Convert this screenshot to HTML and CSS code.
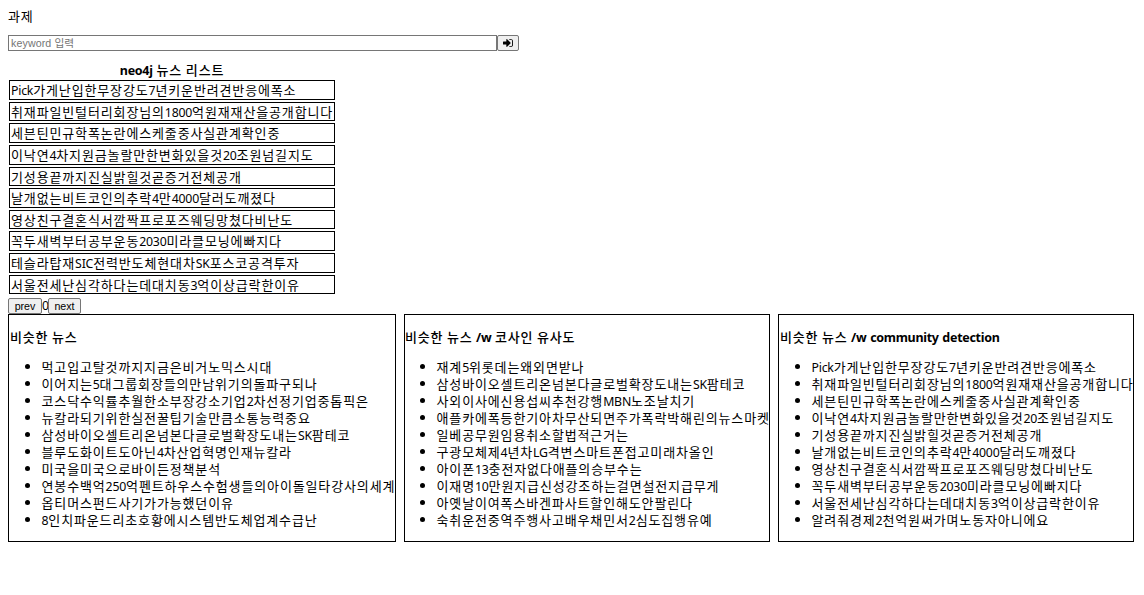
FILE: index.html
```html
<!DOCTYPE html>
<html lang="ko">
<head>
<meta charset="utf-8">
<title>과제</title>
<link rel="stylesheet" href="styles.css">
</head>
<body>
<p class="title">과제</p>
<form class="search">
  <input class="keyword" type="text" placeholder="keyword 입력">
  <button class="btn go" type="button" aria-label="검색"><svg viewBox="0 0 512 512" width="10" height="10"><path d="M416 448h-84c-7 0-12-5-12-12v-20c0-7 5-12 12-12h84c28 0 50-22 50-50V158c0-28-22-50-50-50h-84c-7 0-12-5-12-12V76c0-7 5-12 12-12h84c53 0 96 43 96 96v192c0 53-43 96-96 96zm-27-209L211 61c-15-15-41-5-41 17v96H24c-13 0-24 11-24 24v116c0 13 11 24 24 24h146v96c0 22 26 32 41 17l178-178c9-9 9-25 0-34z"/></svg></button>
</form>
<section class="news">
  <h2 class="caption"><span class="lb">neo4j</span> 뉴스 리스트</h2>
  <div class="row"><span class="lt">Pick</span>가게난입한무장강도<span class="lt">7</span>년키운반려견반응에폭소</div>
  <div class="row">취재파일빈털터리회장님의<span class="lt">1800</span>억원재재산을공개합니다</div>
  <div class="row">세븐틴민규학폭논란에스케줄중사실관계확인중</div>
  <div class="row">이낙연<span class="lt">4</span>차지원금놀랄만한변화있을것<span class="lt">20</span>조원넘길지도</div>
  <div class="row">기성용끝까지진실밝힐것곧증거전체공개</div>
  <div class="row">날개없는비트코인의추락<span class="lt">4</span>만<span class="lt">4000</span>달러도깨졌다</div>
  <div class="row">영상친구결혼식서깜짝프로포즈웨딩망쳤다비난도</div>
  <div class="row">꼭두새벽부터공부운동<span class="lt">2030</span>미라클모닝에빠지다</div>
  <div class="row">테슬라탑재<span class="lt">SIC</span>전력반도체현대차<span class="lt">SK</span>포스코공격투자</div>
  <div class="row">서울전세난심각하다는데대치동<span class="lt">3</span>억이상급락한이유</div>
</section>
<div class="pager"><button class="btn prev" type="button">prev</button><span class="page">0</span><button class="btn next" type="button">next</button></div>
<div class="panels">
  <section class="panel similar">
    <h2 class="heading">비슷한 뉴스</h2>
    <ul class="list">
      <li>먹고입고탈것까지지금은비거노믹스시대</li>
      <li>이어지는<span class="lt">5</span>대그룹회장들의만남위기의돌파구되나</li>
      <li>코스닥수익률추월한소부장강소기업<span class="lt">2</span>차선정기업중톱픽은</li>
      <li>뉴칼라되기위한실전꿀팁기술만큼소통능력중요</li>
      <li>삼성바이오셀트리온넘본다글로벌확장도내는<span class="lt">SK</span>팜테코</li>
      <li>블루도화이트도아닌<span class="lt">4</span>차산업혁명인재뉴칼라</li>
      <li>미국을미국으로바이든정책분석</li>
      <li>연봉수백억<span class="lt">250</span>억펜트하우스수험생들의아이돌일타강사의세계</li>
      <li>옵티머스펀드사기가가능했던이유</li>
      <li><span class="lt">8</span>인치파운드리초호황에시스템반도체업계수급난</li>
    </ul>
  </section>
  <section class="panel cosine">
    <h2 class="heading">비슷한 뉴스 <span class="lb">/w</span> 코사인 유사도</h2>
    <ul class="list">
      <li>재계<span class="lt">5</span>위롯데는왜외면받나</li>
      <li>삼성바이오셀트리온넘본다글로벌확장도내는<span class="lt">SK</span>팜테코</li>
      <li>사외이사에신용섭씨추천강행<span class="lt">MBN</span>노조날치기</li>
      <li>애플카에폭등한기아차무산되면주가폭락박해린의뉴스마켓</li>
      <li>일베공무원임용취소할법적근거는</li>
      <li>구광모체제<span class="lt">4</span>년차<span class="lt">LG</span>격변스마트폰접고미래차올인</li>
      <li>아이폰<span class="lt">13</span>충전자없다애플의승부수는</li>
      <li>이재명<span class="lt">10</span>만원지급신성강조하는걸면설전지급무게</li>
      <li>아옛날이여폭스바겐파사트할인해도안팔린다</li>
      <li>숙취운전중역주행사고배우채민서<span class="lt">2</span>심도집행유예</li>
    </ul>
  </section>
  <section class="panel community">
    <h2 class="heading">비슷한 뉴스 <span class="lb">/w community detection</span></h2>
    <ul class="list">
      <li><span class="lt">Pick</span>가게난입한무장강도<span class="lt">7</span>년키운반려견반응에폭소</li>
      <li>취재파일빈털터리회장님의<span class="lt">1800</span>억원재재산을공개합니다</li>
      <li>세븐틴민규학폭논란에스케줄중사실관계확인중</li>
      <li>이낙연<span class="lt">4</span>차지원금놀랄만한변화있을것<span class="lt">20</span>조원넘길지도</li>
      <li>기성용끝까지진실밝힐것곧증거전체공개</li>
      <li>날개없는비트코인의추락<span class="lt">4</span>만<span class="lt">4000</span>달러도깨졌다</li>
      <li>영상친구결혼식서깜짝프로포즈웨딩망쳤다비난도</li>
      <li>꼭두새벽부터공부운동<span class="lt">2030</span>미라클모닝에빠지다</li>
      <li>서울전세난심각하다는데대치동<span class="lt">3</span>억이상급락한이유</li>
      <li>알려줘경제<span class="lt">2</span>천억원써가며노동자아니에요</li>
    </ul>
  </section>
</div>
</body>
</html>
```
FILE: styles.css
```css
* { box-sizing: border-box; }
body {
  margin: 0;
  padding: 8px;
  background: #fff;
  color: #000;
  font: 13px/17px "Noto Sans CJK KR", sans-serif;
  letter-spacing: 0.86px;
  white-space: nowrap;
}
.lt, .page { font-family: "Noto Sans", sans-serif; font-size: 12.3px; letter-spacing: -0.22px; line-height: 1; }
.page { letter-spacing: 0; }
.lb { font-family: "Noto Sans", sans-serif; font-size: 12.5px; font-weight: 700; letter-spacing: -0.3px; word-spacing: 0.8px; line-height: 1; }
.title { margin: -1px 0 11px; }
.search { display: flex; height: 16px; margin: 0 0 10px; }
.keyword {
  width: 489px;
  height: 16px;
  margin: 0;
  padding: 0 2px;
  border: 1px solid #767676;
  background: #fff;
  font: 10.67px/14px "Liberation Sans", "Noto Sans CJK KR", sans-serif;
  letter-spacing: 0.1px;
}
.keyword::placeholder { color: #757575; }
.btn {
  display: flex;
  align-items: center;
  justify-content: center;
  height: 16px;
  margin: 0;
  padding: 0;
  border: 1px solid #767676;
  border-radius: 2px;
  background: #efefef;
  color: #000;
  font: 10.67px/12px "Liberation Sans", sans-serif;
}
.go { width: 22px; }
.news {
  display: grid;
  grid-template-rows: 17px repeat(10, 19.65px);
  row-gap: 2px;
  width: 328px;
  padding: 0 1px;
}
.caption { margin: 0; font-size: 13px; font-weight: 500; text-align: center; word-spacing: -0.7px; }
.row { border: 1px solid #000; padding: 0 1px; line-height: 18px; }
.pager { display: flex; height: 16px; margin-top: 3.5px; }
.prev { width: 34px; }
.page { width: 6px; line-height: 16px; }
.next { width: 33px; }
.panels { display: flex; gap: 8px; }
.panel { height: 228px; border: 1px solid #000; padding: 13px 0 0 1px; }
.similar { width: 388px; }
.cosine { width: 366px; padding-left: 0; }
.community { width: 356px; }
.heading { margin: 0 0 13px; font-size: 13px; font-weight: 500; letter-spacing: 0.8px; word-spacing: -0.8px; }
.list { margin: 0; padding: 0 0 0 31.5px; }
```
